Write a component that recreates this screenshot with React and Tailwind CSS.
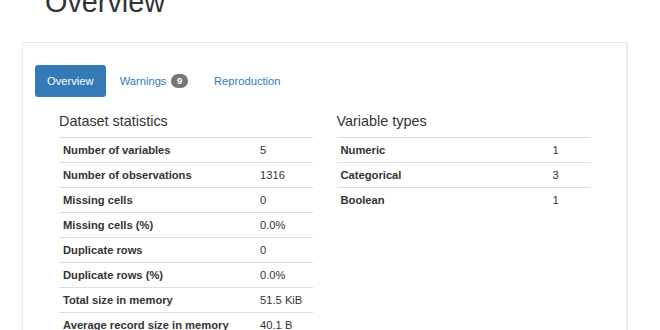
const DATASET = [
  ['Number of variables', '5'],
  ['Number of observations', '1316'],
  ['Missing cells', '0'],
  ['Missing cells (%)', '0.0%'],
  ['Duplicate rows', '0'],
  ['Duplicate rows (%)', '0.0%'],
  ['Total size in memory', '51.5 KiB'],
  ['Average record size in memory', '40.1 B'],
]

const TYPES = [
  ['Numeric', '1'],
  ['Categorical', '3'],
  ['Boolean', '1'],
]

function StatTable({ title, rows, labelW }) {
  return (
    <div>
      <h4 className="text-[14.4px] leading-[1.1] text-[#333] mt-0 mb-[7px]">{title}</h4>
      <table className="w-[254px] border-collapse text-[11.2px] leading-[16px] text-[#333]">
        <tbody>
          {rows.map(([k, v]) => (
            <tr key={k} className="border-t border-[#ddd]">
              <th className={`${labelW} p-[4px] text-left font-bold`}>{k}</th>
              <td className="p-[4px] text-left">{v}</td>
            </tr>
          ))}
        </tbody>
      </table>
    </div>
  )
}

export default function App() {
  return (
    <div className="w-[660px] h-[330px] overflow-hidden bg-white font-['Liberation_Sans',Arial,sans-serif]">
      <h1 className="ml-[45px] mt-[-13px] text-[28.8px] leading-[1.1] text-[#333] font-normal">Overview</h1>

      <div className="ml-[22px] mt-[23px] w-[606px] h-[400px] border border-[#e8e8e8] border-r-2 border-r-[#ececec] px-[12px] pt-[22px]">
        {/* tabs */}
        <div className="flex items-center text-[11.2px] leading-[16px]">
          <span className="px-[12px] py-[8px] rounded-[3px] bg-[#337ab7] text-white">Overview</span>
          <span className="ml-[2px] px-[12px] py-[8px] text-[#337ab7] flex items-center">
            Warnings
            <span className="ml-[5px] h-[14px] px-[5.6px] rounded-full bg-[#777] text-white text-[9.6px] font-bold leading-[14px]">9</span>
          </span>
          <span className="ml-[2px] px-[12px] py-[8px] text-[#337ab7]">Reproduction</span>
        </div>

        {/* content */}
        <div className="mt-[17px] px-[12px] grid grid-cols-2">
          <div className="px-[12px]">
            <StatTable title="Dataset statistics" rows={DATASET} labelW="w-[197px]" />
          </div>
          <div className="px-[12px]">
            <StatTable title="Variable types" rows={TYPES} labelW="w-[212px]" />
          </div>
        </div>
      </div>
    </div>
  )
}
